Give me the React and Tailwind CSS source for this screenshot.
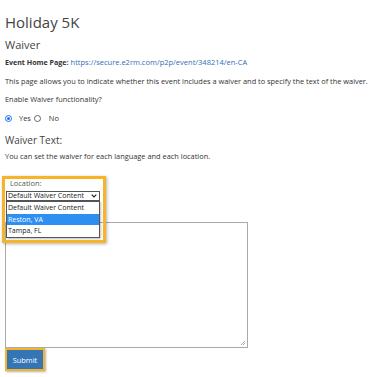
import React from 'react';

const font = { fontFamily: '"Open Sans", "Liberation Sans", sans-serif' };

const Radio = ({ checked }) => (
  <span
    className={`inline-flex w-[7px] h-[7px] rounded-full items-center justify-center border ${
      checked ? 'border-[#1a73e8] bg-white' : 'border-[#666] bg-white'
    }`}
  >
    {checked && <span className="w-[3px] h-[3px] rounded-full bg-[#1a73e8]" />}
  </span>
);

export default function App() {
  return (
    <div className="w-[385px] h-[377px] bg-white overflow-hidden text-[#333]" style={font}>
      <div className="relative pl-[5px] pt-[12px]">
        <h1 className="text-[15px] leading-[20px] text-[#444]">Holiday 5K</h1>
        <h2 className="mt-[5px] text-[11px] leading-[16px] text-[#444]">Waiver</h2>

        <div className="mt-[4px] h-[10px] flex items-center gap-[2px] whitespace-nowrap">
          <span className="font-bold text-[7.1px] leading-[10px]">Event Home Page:</span>
          <span className="text-[#2f6fb3] text-[7.5px] leading-[10px]">https://secure.e2rm.com/p2p/event/348214/en-CA</span>
        </div>

        <p className="mt-[9px] text-[7.4px] leading-[10px] whitespace-nowrap">
          This page allows you to indicate whether this event includes a waiver and to specify the text of the waiver.
        </p>

        <p className="mt-[8px] text-[7.4px] leading-[10px]">Enable Waiver functionality?</p>

        <div className="mt-[9px] flex items-center h-[10px] text-[7.4px] leading-[10px]">
          <Radio checked />
          <span className="ml-[7px]">Yes</span>
          <span className="ml-[3px] flex"><Radio /></span>
          <span className="ml-[8px]">No</span>
        </div>

        <h3 className="mt-[10px] text-[10px] leading-[14px] text-[#444]">Waiver Text:</h3>
        <p className="mt-[4px] text-[7.4px] leading-[10px]">You can set the waiver for each language and each location.</p>

        <div className="mt-[17px] pl-[5px] text-[7.4px] leading-[10px] text-[#555]">Location:</div>
        <div className="mt-[3px] ml-[1px] w-[94px] h-[10px] border border-[#555] flex items-center justify-between px-[1px] text-[7px] leading-[8px] text-[#222] whitespace-nowrap overflow-hidden">
          <span>Default Waiver Content</span>
          <svg width="6" height="4" viewBox="0 0 6 4" className="mr-[1px] shrink-0">
            <path d="M0.7 0.7 L3 3 L5.3 0.7" fill="none" stroke="#222" strokeWidth="1.2" />
          </svg>
        </div>

        <div className="mt-[21px] w-[243px] h-[126px] border border-[#aaa] bg-white relative">
          <svg width="6" height="6" viewBox="0 0 6 6" className="absolute right-[1px] bottom-[1px]">
            <path d="M5 1 L1 5 M5 3 L3 5" stroke="#999" strokeWidth="0.8" />
          </svg>
        </div>

        <div className="w-[40px] h-[23px] border-2 border-[#f5b42a] shadow-[1px_1px_2px_rgba(0,0,0,0.3)] flex">
          <button className="flex-1 bg-[#3475b6] text-white text-[7.4px] leading-[10px]">Submit</button>
        </div>

        <div className="absolute left-[6px] top-[201px] w-[94px] border border-[#555] bg-white text-[7px] leading-[12px] text-[#222] shadow-[1px_1px_2px_rgba(0,0,0,0.25)] whitespace-nowrap">
          <div className="px-[1px] h-[12px]">Default Waiver Content</div>
          <div className="px-[1px] h-[11px] bg-[#2e8ff2] text-white">Reston, VA</div>
          <div className="px-[1px] h-[12px]">Tampa, FL</div>
        </div>

        <div className="absolute left-[2px] top-[176px] w-[104px] h-[67px] border-[3px] border-[#f5b42a] shadow-[1px_1px_3px_rgba(0,0,0,0.3)] pointer-events-none" />
      </div>
    </div>
  );
}
